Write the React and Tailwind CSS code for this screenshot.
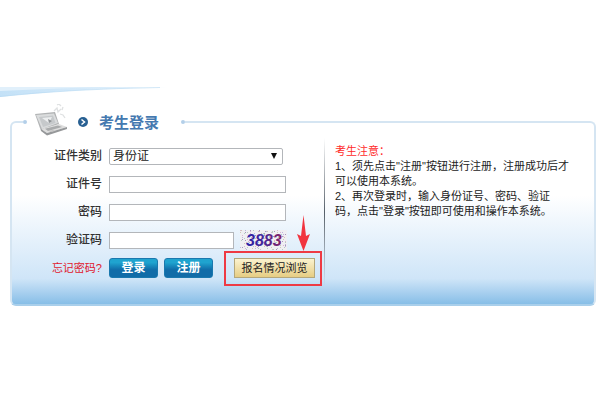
import React from "react";

const field = "h-[17px] border border-[#b3b6ba] bg-white px-1 text-xs outline-none";
const blueButton =
  "h-5 w-[49px] rounded-[3px] border border-[#1a78ae] bg-linear-to-b from-[#1fa3cf] from-20% to-[#116ca8] to-60% text-xs leading-none font-bold text-white";

function Row({ label, id, children }) {
  return (
    <div className="flex h-7 items-center gap-[7px]">
      <label htmlFor={id} className="w-[90px] shrink-0 text-right text-xs font-medium text-[#333]">
        {label}
      </label>
      {children}
    </div>
  );
}

function Wave() {
  return (
    <svg className="block h-[10px] w-[168px]" viewBox="0 0 168 10" aria-hidden="true">
      <defs>
        <linearGradient id="wave" x1="0" x2="1">
          <stop offset="0" stopColor="#c3e1f7" />
          <stop offset="0.5" stopColor="#d5eafa" />
          <stop offset="1" stopColor="#eef7fd" />
        </linearGradient>
      </defs>
      <path d="M0 0H168Q70 2 0 10Z" fill="url(#wave)" />
      <path d="M0 0H100Q45 2 0 4Z" fill="#e1f0fb" />
      <path d="M0 9.500Q70 2 160 0.500" fill="none" stroke="#b5d8f2" strokeWidth="0.600" />
    </svg>
  );
}

function Laptop() {
  return (
    <svg className="h-9 w-9 shrink-0" viewBox="0 0 36 36" aria-hidden="true">
      <path d="M0 10L20 8L24 20L6 27Z" fill="#b1b3b4" />
      <path d="M1 11L19 9.500L23 19L7 25Z" fill="#dadcdd" />
      <path d="M4 13L18 11.500L20.500 19L8 23Z" fill="#c6c9cb" />
      <path d="M7 14L17 13L14 19Z" fill="#eceeef" />
      <path d="M13 15L17 17L14 19Z" fill="#8e9295" />
      <path d="M6 25L24 20L32 23L12 29Z" fill="#dedede" />
      <path d="M6 25L12 29L32 23V25L12 31.500L6 27Z" fill="#96989a" />
      <path d="M10 24.800L23 21.500L27 23L13 27Z" fill="#a9abac" />
      <path d="M14 27L18 26L20 27L16 28Z" fill="#c0c0c0" />
      <path d="M19 7L22 4L23 8L26 5M25 10L28 11L30 14M22 1L24 0L26 2M27 6L28 3" fill="none" stroke="#dfe1e2" strokeWidth="1.300" />
    </svg>
  );
}

function Bullet() {
  return (
    <svg className="h-[10px] w-[10px] shrink-0" viewBox="0 0 10 10" aria-hidden="true">
      <circle cx="5" cy="5" r="5" fill="#286092" />
      <path d="M3.500 2.500L6.500 5L3.500 7.500" fill="none" stroke="#fff" strokeWidth="1.500" />
    </svg>
  );
}

const specks = Array.from({ length: 150 }, (_, i) => ({
  x: (i * 17 + ((i * i) % 7)) % 46,
  y: (i * 11 + ((i * i) % 5) + Math.floor(i / 20)) % 20,
  c: ["#d9b6d0", "#bdb6dd", "#d0c8b4", "#b4cfc2", "#a795ba"][i % 5],
}));

function Captcha() {
  return (
    <svg className="-ml-px h-5 w-[47px]" viewBox="0 0 47 20" role="img" aria-label="3883">
      <defs>
        <linearGradient id="digits" x1="0" x2="1">
          <stop offset="0" stopColor="#2b21a8" />
          <stop offset="0.500" stopColor="#46289a" />
          <stop offset="1" stopColor="#832064" />
        </linearGradient>
      </defs>
      <rect width="47" height="20" fill="#f0eff3" />
      {specks.map((s, i) => (
        <rect key={i} x={s.x} y={s.y} width="1" height="1" fill={s.c} />
      ))}
      <text x="6" y="16" fontFamily="Liberation Sans, sans-serif" fontSize="16" fontWeight="bold" fontStyle="italic" fill="url(#digits)">
        3883
      </text>
    </svg>
  );
}

export default function App() {
  return (
    <main className="min-h-screen bg-white pt-[87px] font-['Liberation_Sans','Noto_Sans_CJK_SC',sans-serif] text-[#222]">
      <Wave />
      <section className="mt-6 mr-1 ml-[10px] rounded-md border-2 border-[#d5e5f2] border-b-[#a9cfeb] bg-linear-to-b from-white from-40% via-[#cfe5f8] via-86% to-[#87bee7] pb-[18px]">
        <header className="-mt-[17px] ml-[11px] flex h-8 w-[162px] items-center bg-white">
          <i className="h-1 w-1 shrink-0 rounded-full bg-[#b3cfe9]" />
          <span className="ml-[8px] flex"><Laptop /></span>
          <span className="ml-[7px] flex"><Bullet /></span>
          <h1 className="ml-[11px] text-[15px] leading-none font-bold whitespace-nowrap text-[#4579b0]">考生登录</h1>
          <i className="ml-auto h-1 w-1 shrink-0 rounded-full bg-[#b3cfe9]" />
        </header>

        <div className="flex items-start">
          <form className="w-[312px] shrink-0 pt-1" onSubmit={(e) => e.preventDefault()}>
            <Row label="证件类别" id="type">
              <div className="relative flex w-[174px]">
                <select id="type" className="h-[17px] w-full appearance-none rounded-[2px] border border-[#b3b6ba] bg-white pl-[3px] text-xs leading-none outline-none">
                  <option>身份证</option>
                </select>
                <svg className="pointer-events-none absolute top-[5px] right-[6px] h-[6px] w-[6px]" viewBox="0 0 6 6" aria-hidden="true">
                  <path d="M0 0H6L3 6Z" fill="#111" />
                </svg>
              </div>
            </Row>
            <Row label="证件号" id="number">
              <input id="number" type="text" className={`${field} w-[177px]`} />
            </Row>
            <Row label="密码" id="password">
              <input id="password" type="password" className={`${field} w-[177px]`} />
            </Row>
            <Row label="验证码" id="code">
              <input id="code" type="text" className={`${field} w-[125px]`} />
              <Captcha />
            </Row>
            <div className="flex h-7 items-center gap-[6px]">
              <a href="#forgot" className="mr-px w-[90px] shrink-0 text-right text-[11px] text-[#e0182d]">
                忘记密码?
              </a>
              <button type="submit" className={blueButton}>登录</button>
              <button type="button" className={blueButton}>注册</button>
              <div className="relative ml-[15px] flex shrink-0">
                <button
                  type="button"
                  className="h-5 w-[81px] border border-[#b4a77b] bg-linear-to-b from-[#fbf3cf] to-[#e6cd83] text-[11px] leading-none whitespace-nowrap text-[#222]"
                >
                  报名情况浏览
                </button>
                <span className="pointer-events-none absolute -top-[7px] -right-[7px] -bottom-[8px] -left-[10px] border-2 border-[#ee3a44]" />
                <svg className="pointer-events-none absolute -top-[43px] right-[5px] h-9 w-[13px]" viewBox="0 0 13 36" aria-hidden="true">
                  <path d="M6.500 0L9 21L13 19L6.500 36L0 19L4 21Z" fill="#f1343f" />
                </svg>
              </div>
            </div>
          </form>

          <div className="h-[148px] w-px shrink-0 bg-linear-to-b from-transparent via-[#555f69] to-transparent" />

          <aside className="min-w-0 flex-1 pt-[6px] pr-6 pl-[10px] text-[11px] leading-[15px]">
            <h2 className="text-[#ff2b2b]">考生注意：</h2>
            <p>1、须先点击"注册"按钮进行注册，注册成功后才可以使用本系统。</p>
            <p>2、再次登录时，输入身份证号、密码、验证码，点击"登录"按钮即可使用和操作本系统。</p>
          </aside>
        </div>
      </section>
    </main>
  );
}
